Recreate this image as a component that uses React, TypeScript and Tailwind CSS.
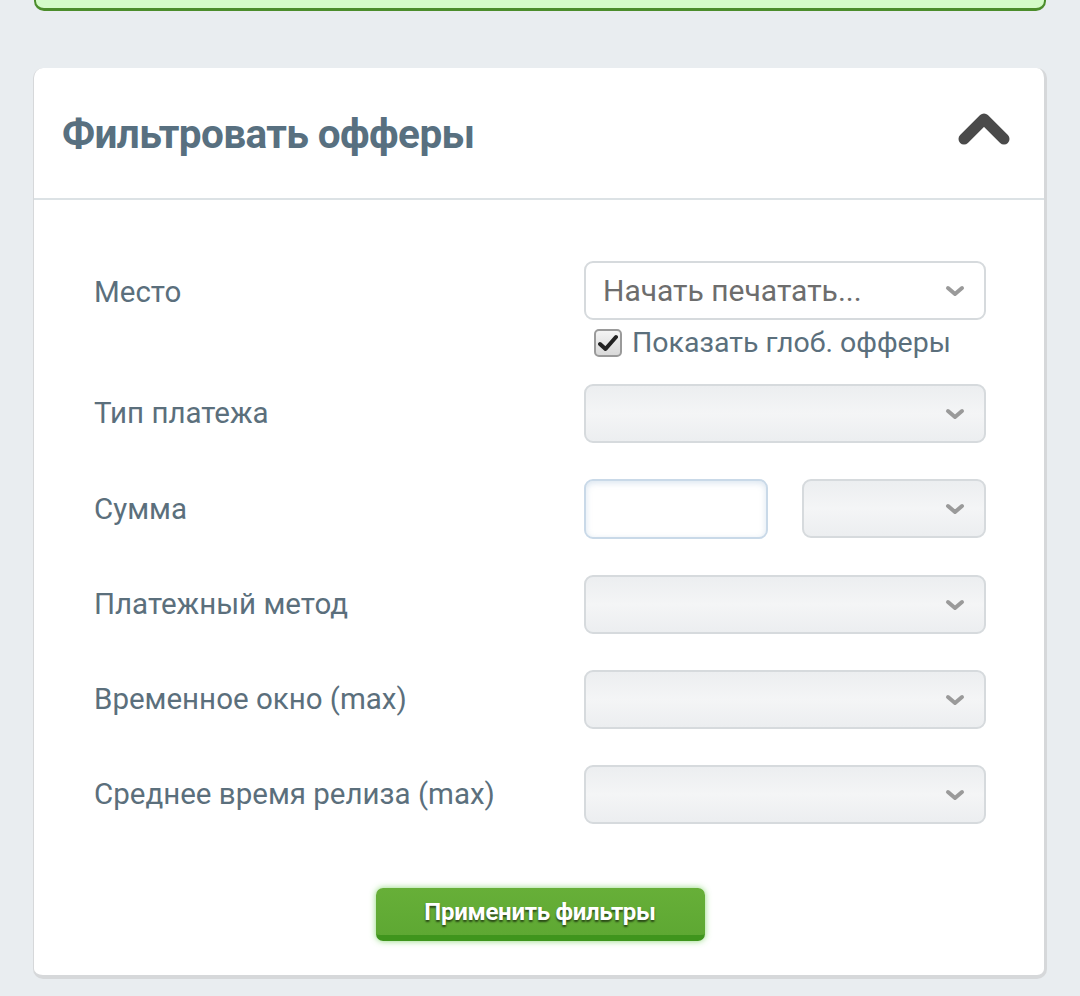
import React from 'react';

const rows = [
  { label: 'Тип платежа' },
  { label: 'Сумма', split: true },
  { label: 'Платежный метод' },
  { label: 'Временное окно (max)' },
  { label: 'Среднее время релиза (max)' },
];

function Chevron() {
  return (
    <svg width="22" height="14" viewBox="0 0 22 14" className="shrink-0">
      <path d="M4 4 L11 10 L18 4" fill="none" stroke="#9a9a9a" strokeWidth="4" strokeLinecap="round" strokeLinejoin="round" />
    </svg>
  );
}

function SelectBox({ placeholder, className = '' }: { placeholder?: string; className?: string }) {
  const bg = placeholder
    ? 'bg-white'
    : 'bg-gradient-to-b from-[#eceef0] via-[#f4f5f6] to-[#eceef0]';
  return (
    <div
      className={`flex h-[59px] items-center justify-between rounded-[9px] border-2 border-[#d6dadd] pl-[17px] pr-[18px] ${bg} ${className}`}
    >
      <span className="text-[30px] text-[#6d6d6d]">{placeholder}</span>
      <Chevron />
    </div>
  );
}

export default function App() {
  return (
    <div className="min-h-[996px] bg-[#e9edf0] font-['Roboto',sans-serif]">
      <div className="mx-[34px] h-[11px] rounded-b-[10px] border-x-2 border-b-[3px] border-[#4b8d2b] bg-[#d4fcc8]" />

      <div className="mx-[33px] mt-[57px] rounded-[10px] border-l border-r-[3px] border-b-[4px] border-[#d6d8da] bg-white">
        <div className="flex h-[132px] items-center justify-between border-b-2 border-[#dce2e5] pl-[28px] pr-[33px]">
          <h2 className="mt-[3px] text-[40.5px] font-bold tracking-[-0.6px] text-[#587080]">
            Фильтровать офферы
          </h2>
          <svg width="54" height="36" viewBox="0 0 54 36" className="-mt-[10px]">
            <path d="M7 29 L27 9 L47 29" fill="none" stroke="#4a4a4a" strokeWidth="11" strokeLinecap="round" strokeLinejoin="round" />
          </svg>
        </div>

        <div className="pl-[60px] pr-[58px] pt-[61px] pb-[34px] text-[29.5px] text-[#5b6f7c]">
          <div className="flex justify-between">
            <span className="mt-[9px]">Место</span>
            <div className="flex w-[402px] flex-col">
              <SelectBox placeholder="Начать печатать..." />
              <label className="mt-[7px] ml-[10px] flex items-center gap-[10px]">
                <span className="flex h-[28px] w-[28px] items-center justify-center rounded-[5px] border-2 border-[#9a9a9a] bg-gradient-to-b from-[#f4f4f4] to-[#d9d9d9]">
                  <svg width="20" height="18" viewBox="0 0 20 18">
                    <path d="M2 10 L7.5 15 L18 3" fill="none" stroke="#222" strokeWidth="4" strokeLinecap="round" strokeLinejoin="round" />
                  </svg>
                </span>
                <span className="text-[28.5px] leading-[32px]">Показать глоб. офферы</span>
              </label>
            </div>
          </div>

          <div className="mt-[25px] flex flex-col gap-[36px]">
            {rows.map((r) => (
              <div key={r.label} className="flex items-center justify-between">
                <span>{r.label}</span>
                {r.split ? (
                  <div className="flex w-[402px] justify-between">
                    <div className="h-[60px] w-[184px] rounded-[9px] border-2 border-[#c9d9e8] bg-white shadow-[inset_0_2px_6px_rgba(170,195,220,0.45)]" />
                    <SelectBox className="w-[184px]" />
                  </div>
                ) : (
                  <SelectBox className="w-[402px]" />
                )}
              </div>
            ))}
          </div>

          <div className="mt-[64px] flex justify-center">
            <button className="h-[53px] w-[329px] rounded-[7px] border-b-[6px] border-[#3f951d] bg-gradient-to-b from-[#67af38] to-[#5ea833] text-[24px] font-bold tracking-[-0.3px] text-white shadow-[0_0_6px_rgba(90,200,60,0.7)] [text-shadow:0_2px_2px_rgba(0,0,0,0.6)]">
              Применить фильтры
            </button>
          </div>
        </div>
      </div>
    </div>
  );
}
